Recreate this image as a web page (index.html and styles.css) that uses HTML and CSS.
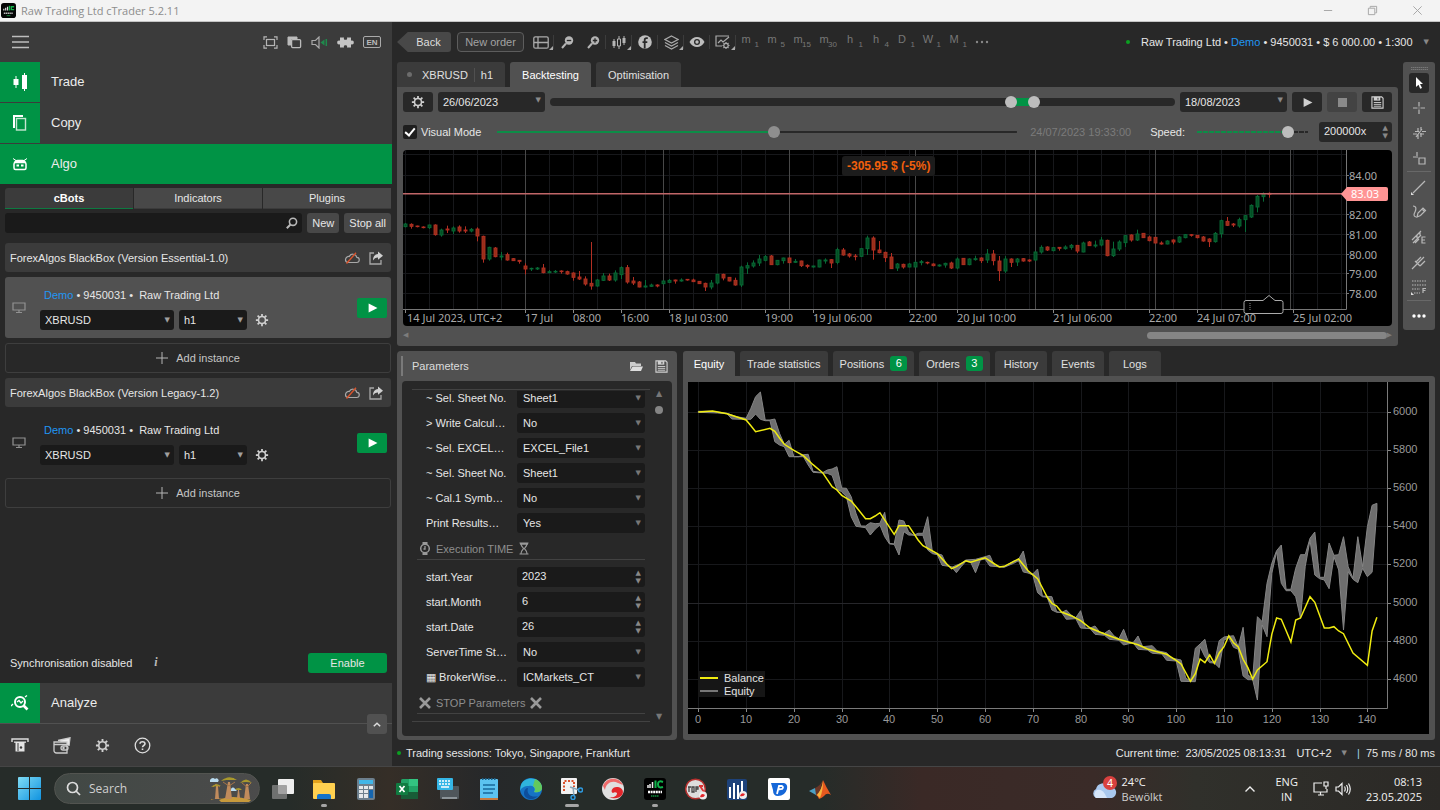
FILE: index.html
```html
<!DOCTYPE html>
<html lang="en">
<head>
<meta charset="utf-8">
<title>Raw Trading Ltd cTrader 5.2.11</title>
<link rel="stylesheet" href="styles.css">
</head>
<body>
<svg class="defs" aria-hidden="true">
  <symbol id="gear" viewBox="0 0 16 16"><circle cx="8" cy="8" r="4" fill="none" stroke="currentColor" stroke-width="1.8"/><path d="M8 1v2.6M8 12.4V15M1 8h2.6M12.4 8H15M3 3l2 2M11 11l2 2M3 13l2-2M11 5l2-2" stroke="currentColor" stroke-width="2" fill="none"/></symbol>
  <symbol id="save" viewBox="0 0 14 14"><path d="M1 1h10.500L13 2.500V13H1z" fill="none" stroke="currentColor" stroke-width="1.200"/><path d="M3 1h7v4H3z" fill="currentColor"/><path d="M7.500 2v2" stroke="#282828"/><path d="M3 7h8M3 9h8M3 11h8" stroke="currentColor"/></symbol>
  <symbol id="cloud" viewBox="0 0 16 12"><path d="M4 10.500h8.500a2.600 2.600 0 0 0 .3-5.200A4 4 0 0 0 5.300 4.500 3 3 0 0 0 4 10.500z" fill="none" stroke="#a8a8a8" stroke-width="1.200"/><path d="M2.500 11.500L12 .8" stroke="#d8532c" stroke-width="1.400"/></symbol>
  <symbol id="share" viewBox="0 0 14 14"><path d="M5 2H1v11h11V9" fill="none" stroke="#a8a8a8" stroke-width="1.300"/><path d="M9 .5l5 4.300-5 4V6.500C6.500 6.500 5.200 7.500 4 9.500 4 5.500 6 3.300 9 3z" fill="#d0d0d0"/></symbol>
  <symbol id="monitor" viewBox="0 0 14 12"><path d="M1 1h12v7H1zM4 10.500h6M7 8v2.500" fill="none" stroke="#929292" stroke-width="1.200"/></symbol>
  <symbol id="play" viewBox="0 0 10 10"><path d="M1.500 1l8 4-8 4z" fill="currentColor"/></symbol>
</svg>

<header class="titlebar">
  <svg class="app-logo" viewBox="0 0 16 16"><rect width="16" height="16" rx="3" fill="#050505"/><path d="M3 8V6M5 8V5M7 8V4" stroke="#ddd" stroke-width="1.300"/><path d="M9 3v5M14 4h-3v3h3" stroke="#13b34a" stroke-width="1.400" fill="none"/><path d="M3 11h10" stroke="#bbb" stroke-width="1.600" stroke-dasharray="1.500 .5"/><path d="M6 13.500h4" stroke="#138a3a"/></svg>
  <span>Raw Trading Ltd cTrader 5.2.11</span>
  <div class="win-controls">
    <button aria-label="Minimise"><svg viewBox="0 0 12 12"><path d="M1 6h9"/></svg></button>
    <button aria-label="Restore"><svg viewBox="0 0 12 12"><path d="M1.500 3.500h7v7h-7zM3.500 3V1.500h7v7H9"/></svg></button>
    <button aria-label="Close"><svg viewBox="0 0 12 12"><path d="M1.500 1.500l9 9M10.500 1.500l-9 9"/></svg></button>
  </div>
</header>

<div class="app">
  <aside class="sidebar">
    <div class="side-head">
      <button class="icon-btn" aria-label="Menu"><svg width="17" height="14" viewBox="0 0 17 14"><path d="M0 1.500h17M0 7h17M0 12.500h17" stroke="#bdbdbd" stroke-width="1.300"/></svg></button>
      <div class="side-tools">
        <button class="icon-btn" aria-label="Fullscreen"><svg width="15" height="13" viewBox="0 0 15 13" fill="none" stroke="#b5b5b5" stroke-width="1.200"><rect x="3.500" y="3.500" width="8" height="6"/><path d="M4 .8H1V4M11 .8h3V4M4 12.200H1V9M11 12.200h3V9"/></svg></button>
        <button class="icon-btn" aria-label="Windows"><svg width="15" height="13" viewBox="0 0 15 13"><path d="M1 1h9v2H4v6H1z" fill="#bbb" stroke="#bbb"/><rect x="4.600" y="3.600" width="9" height="8" rx="1" fill="#3b3b3b" stroke="#bbb" stroke-width="1.300"/></svg></button>
        <button class="icon-btn" aria-label="Sound"><svg width="17" height="13" viewBox="0 0 17 13" fill="none"><path d="M8 1v11L4.500 8.500H1v-4h3.500z" stroke="#aaa" stroke-width="1.200"/><path d="M9.500 6.500l4-3v6z" fill="#1f8a4c"/><path d="M15.300 3v7" stroke="#1f8a4c" stroke-width="1.500"/></svg></button>
        <button class="icon-btn" aria-label="Plugins"><svg width="17" height="13" viewBox="0 0 17 13"><path d="M3 1.500h4c-.6 2 .5 2.300 1.500 2.300S10.600 3.500 10 1.500h4v3.200c2-.6 2.800.5 2.800 1.800s-.8 2.400-2.800 1.800v3.200h-4c.6-2-.5-2.300-1.500-2.300S6.400 9.500 7 11.500H3V8.300C1 8.900.2 7.800.2 6.500S1 4.100 3 4.700z" fill="#c4c4c4"/></svg></button>
        <button class="lang">EN</button>
      </div>
    </div>
    <nav class="nav">
      <a href="#trade" class="nav-item"><span class="nav-ico"><svg width="16" height="18" viewBox="0 0 16 18" fill="#fff"><path d="M3.500 3h1v12h-1zM1.500 6h5v6h-5zM12 0h1v18h-1zM10 2h5v14h-5z"/></svg></span>Trade</a>
      <a href="#copy" class="nav-item"><span class="nav-ico"><svg width="16" height="18" viewBox="0 0 16 18" fill="none" stroke="#fff"><path d="M2 14V2h9" stroke-width="2"/><rect x="4.500" y="4.500" width="9" height="11.500" stroke-width="1.400" stroke="#c5e5d2"/></svg></span>Copy</a>
      <a href="#algo" class="nav-item active"><span class="nav-ico"><svg width="16" height="16" viewBox="0 0 16 16"><path d="M1 2.500l3 2M15 2.500l-3 2" stroke="#fff"/><path d="M2 7c0-2 1.500-3.200 3.500-3.200h5C12.500 3.800 14 5 14 7z" fill="#fff"/><rect x="2" y="6.500" width="12" height="7" rx="1.500" fill="none" stroke="#fff" stroke-width="1.500"/><path d="M4.500 9.500h2.500M9 9.500h2.500" stroke="#fff" stroke-width="1.800"/></svg></span>Algo</a>
    </nav>
    <div class="side-tabs" role="tablist">
      <button role="tab" class="on">cBots</button><button role="tab">Indicators</button><button role="tab">Plugins</button>
    </div>
    <div class="side-search">
      <label class="search-box"><input type="text" aria-label="Search cBots"><svg width="12" height="12" viewBox="0 0 12 12"><circle cx="7" cy="4.800" r="3.600" fill="none" stroke="#b8b8b8" stroke-width="1.600"/><path d="M4.500 7.500L.8 11.200" stroke="#b8b8b8" stroke-width="2"/></svg></label>
      <button>New</button><button>Stop all</button>
    </div>
    <div class="bots">
      <div class="bot-head"><span>ForexAlgos BlackBox (Version Essential-1.0)</span><svg width="16" height="12"><use href="#cloud"/></svg><svg width="14" height="14"><use href="#share"/></svg></div>
      <div class="bot selected">
        <svg width="14" height="12"><use href="#monitor"/></svg>
        <div class="bot-body">
          <p><a href="#acc">Demo</a> • 9450031 •&nbsp; Raw Trading Ltd</p>
          <div class="bot-ctl"><span class="sel sym"><select aria-label="Symbol"><option>XBRUSD</option></select></span><span class="sel per"><select aria-label="Period"><option>h1</option></select></span><button class="icon-btn" aria-label="Settings"><svg width="14" height="14"><use href="#gear"/></svg></button></div>
        </div>
        <button class="run" aria-label="Start"><svg width="11" height="12"><use href="#play"/></svg></button>
      </div>
      <button class="add"><svg width="12" height="12" viewBox="0 0 12 12"><path d="M6 0v12M0 6h12" stroke="#b5b5b5"/></svg>Add instance</button>
      <div class="bot-head"><span>ForexAlgos BlackBox (Version Legacy-1.2)</span><svg width="16" height="12"><use href="#cloud"/></svg><svg width="14" height="14"><use href="#share"/></svg></div>
      <div class="bot">
        <svg width="14" height="12"><use href="#monitor"/></svg>
        <div class="bot-body">
          <p><a href="#acc">Demo</a> • 9450031 •&nbsp; Raw Trading Ltd</p>
          <div class="bot-ctl"><span class="sel sym"><select aria-label="Symbol"><option>XBRUSD</option></select></span><span class="sel per"><select aria-label="Period"><option>h1</option></select></span><button class="icon-btn" aria-label="Settings"><svg width="14" height="14"><use href="#gear"/></svg></button></div>
        </div>
        <button class="run" aria-label="Start"><svg width="11" height="12"><use href="#play"/></svg></button>
      </div>
      <button class="add"><svg width="12" height="12" viewBox="0 0 12 12"><path d="M6 0v12M0 6h12" stroke="#b5b5b5"/></svg>Add instance</button>
    </div>
    <div class="sync"><span>Synchronisation disabled</span><i>i</i><button>Enable</button></div>
    <a href="#analyze" class="nav-item analyze"><span class="nav-ico"><svg width="18" height="18" viewBox="0 0 18 18" fill="none" stroke="#fff"><circle cx="9" cy="8" r="5" stroke-width="2"/><path d="M12.500 11.500l4 4" stroke-width="2.600"/><path d="M6 8l2-1.500L10 9l2-2M0 12l2-2M14 3l2-1.500" stroke-width="1.300"/></svg></span>Analyze</a>
    <div class="side-foot">
      <button class="icon-btn" aria-label="Deposit"><svg width="18" height="14" viewBox="0 0 18 14"><path d="M1 4V1h16v3" fill="none" stroke="#ddd" stroke-width="1.400"/><path d="M3 3.500h12v1.300H3zM4.500 4h9v9.500h-9z" fill="#e4e4e4"/><path d="M7 5v8" stroke="#3b3b3b"/><circle cx="10" cy="9.500" r="1.200" fill="#3b3b3b"/></svg></button>
      <button class="icon-btn" aria-label="Wallet"><svg width="18" height="17" viewBox="0 0 18 17" fill="none" stroke="#ccc" stroke-width="1.300"><path d="M5 3.500L17 .8l-1 8" fill="#eee"/><path d="M1 5h13v11H3.500C2 16 1 15 1 13.500zM1 7.500h13" fill="#3b3b3b"/><rect x="8" y="9" width="7" height="4" rx="2"/><circle cx="10.500" cy="11" r=".6"/></svg></button>
      <button class="icon-btn" aria-label="Settings"><svg width="15" height="15"><use href="#gear"/></svg></button>
      <button class="icon-btn" aria-label="Help"><svg width="17" height="17" viewBox="0 0 17 17" fill="none" stroke="#ddd"><circle cx="8.500" cy="8.500" r="7.300" stroke-width="1.300"/><path d="M6 6.800C6 4 11 4 11 6.800c0 1.700-2.500 1.700-2.500 3.400M8.500 11.500v1.500" stroke-width="1.600"/></svg></button>
      <button class="collapse" aria-label="Collapse"><svg width="8" height="5" viewBox="0 0 8 5"><path d="M.8 4.300L4 1.200l3.200 3.100" fill="none" stroke="#ddd" stroke-width="1.500"/></svg></button>
    </div>
  </aside>

  <main class="main">
    <div class="toolbar">
      <button class="back"><span>Back</span></button>
      <button class="new-order">New order</button>
      <div class="tools">
        <button class="icon-btn c s" aria-label="Layout"><svg width="16" height="13" viewBox="0 0 16 13" fill="none" stroke="#aaa" stroke-width="1.300"><rect x=".8" y=".8" width="14.400" height="11.400" rx="1.500"/><path d="M5 1v11M5 6.500h10M1 6.500h4"/></svg></button>
        <button class="icon-btn" aria-label="Zoom out"><svg width="13" height="13" viewBox="0 0 13 13"><circle cx="8" cy="4.500" r="4.200" fill="#b5b5b5"/><path d="M5 7.500L1 12" stroke="#b5b5b5" stroke-width="2"/><path d="M5.800 4.500h4.400" stroke="#282828" stroke-width="1.300"/></svg></button>
        <button class="icon-btn s" aria-label="Zoom in"><svg width="13" height="13" viewBox="0 0 13 13"><circle cx="8" cy="4.500" r="4.200" fill="#b5b5b5"/><path d="M5 7.500L1 12" stroke="#b5b5b5" stroke-width="2"/><path d="M5.800 4.500h4.400M8 2.300v4.400" stroke="#282828" stroke-width="1.300"/></svg></button>
        <button class="icon-btn c s" aria-label="Chart type"><svg width="14" height="15" viewBox="0 0 14 15"><path d="M2 4v9M7 1v13M12 1v9" stroke="#b5b5b5"/><path d="M.5 6h3v5h-3zM10.500 3h3v5h-3z" fill="#b5b5b5"/><path d="M5.500 4h3v7h-3z" fill="#282828" stroke="#b5b5b5"/></svg></button>
        <button class="icon-btn s" aria-label="Indicators"><svg width="14" height="14" viewBox="0 0 14 14"><circle cx="7" cy="7" r="6.800" fill="#bdbdbd"/><path d="M9.800 3.200H8.500C7.200 3.200 6.700 4 6.700 5v8.500M4.500 7.200h4.800" stroke="#282828" stroke-width="1.800" fill="none"/></svg></button>
        <button class="icon-btn c s" aria-label="Layers"><svg width="15" height="15" viewBox="0 0 15 15" fill="none" stroke="#aaa" stroke-width="1.200"><path d="M7.500 1L14 4.500 7.500 8 1 4.500zM1 7.500L7.500 11 14 7.500M1 10.500L7.500 14 14 10.500"/></svg></button>
        <button class="icon-btn s" aria-label="View"><svg width="16" height="12" viewBox="0 0 16 12"><path d="M.5 6C4-.6 12-.6 15.500 6 12 12.600 4 12.600.5 6z" fill="#bdbdbd"/><circle cx="8" cy="6" r="3" fill="#282828"/><circle cx="8" cy="6" r="1.700" fill="#bdbdbd"/></svg></button>
        <button class="icon-btn c s" aria-label="Chart settings"><svg width="16" height="15" viewBox="0 0 16 15" fill="none" stroke="#aaa" stroke-width="1.200"><path d="M14 1H1v10h6M3 8l3-3 2 2 6-5"/><circle cx="11" cy="10.500" r="2.200"/><path d="M11 7v1.200M11 12.800V14M7.500 10.500h1.200M13.300 10.500h1.200M8.500 8l.9.900M12.600 12.100l.9.900M8.500 13l.9-.9M12.600 8.900l.9-.9"/></svg></button>
      </div>
      <div class="frames"><button>m<sub>1</sub></button><button>m<sub>5</sub></button><button>m<sub>15</sub></button><button>m<sub>30</sub></button><button>h<sub>1</sub></button><button>h<sub>4</sub></button><button>D<sub>1</sub></button><button>W<sub>1</sub></button><button>M<sub>1</sub></button><button class="more" aria-label="More"><svg width="14" height="4" viewBox="0 0 14 4" fill="#888"><circle cx="2" cy="2" r="1.200"/><circle cx="7" cy="2" r="1.200"/><circle cx="12" cy="2" r="1.200"/></svg></button></div>
      <div class="account"><b class="dot"></b><span>Raw Trading Ltd • <a href="#acc">Demo</a> • 9450031 • $ 6 000.00 • 1:300</span><i class="tri">▼</i></div>
    </div>

    <div class="top">
      <section class="backtest">
        <div class="tabs" role="tablist">
          <button role="tab" class="symtab"><b></b><span>XBRUSD</span><span class="per-lbl">h1</span></button>
          <button role="tab" class="on">Backtesting</button>
          <button role="tab">Optimisation</button>
        </div>
        <div class="bt-panel">
          <div class="row">
            <button class="sq" aria-label="Settings"><svg width="14" height="14"><use href="#gear"/></svg></button>
            <span class="sel date"><select aria-label="From"><option>26/06/2023</option></select></span>
            <div class="dual">
              <div class="dual-fill" style="left:73.7%;width:3.7%"></div>
              <input type="range" aria-label="Range start" min="0" max="1000" value="742">
              <input type="range" aria-label="Range end" min="0" max="1000" value="779">
            </div>
            <span class="sel date"><select aria-label="To"><option>18/08/2023</option></select></span>
            <button class="sq" aria-label="Play"><svg width="11" height="11"><use href="#play"/></svg></button>
            <button class="sq dim" aria-label="Stop"><svg width="9" height="9"><rect width="9" height="9" fill="#8a8a8a"/></svg></button>
            <button class="sq" aria-label="Save"><svg width="13" height="13"><use href="#save"/></svg></button>
          </div>
          <div class="row">
            <label class="check"><input type="checkbox" checked>Visual Mode</label>
            <input class="line-range visual" type="range" aria-label="Progress" min="0" max="1000" value="532">
            <span class="stamp">24/07/2023 19:33:00</span>
            <label for="speed">Speed:</label>
            <input id="speed" class="line-range speed" type="range" min="0" max="1000" value="859">
            <span class="spin rate"><input type="text" aria-label="Speed value" value="200000x"><i>▲<br>▼</i></span>
          </div>
          <div class="price-chart">
            <svg id="price" viewBox="0 0 989 176" role="img" aria-label="XBRUSD h1 price chart"></svg>
            <output class="pl">-305.95 $ (-5%)</output>
          </div>
          <div class="hscroll"><i>◀</i><span><b></b></span><i>▶</i></div>
        </div>
      </section>
      <div class="drawbar">
        <svg class="grip" width="17" height="3" viewBox="0 0 17 3"><path d="M0 .5h17M0 2.500h17" stroke="#777" stroke-dasharray="1.500 .5"/></svg>
        <button class="cur" aria-label="Cursor"><svg width="9" height="12" viewBox="0 0 9 12"><path d="M1 0l7 7H5l2 4-1.800.8-1.700-4L1 10z" fill="#fff"/></svg></button>
        <button aria-label="Crosshair"><svg viewBox="0 0 14 14"><path d="M7 1v4.500M7 8.500V13M1 7h4.500M8.500 7H13M6.500 7h1"/></svg></button>
        <button aria-label="Sync crosshair"><svg viewBox="0 0 14 14"><path d="M6 2v4M6 8v5M1 8h4M8 8h4M9 1v4M9 7v4M3 5.500h4M10 5.500h4M4 11l6-8"/></svg></button>
        <button aria-label="Magnet"><svg viewBox="0 0 14 14"><path d="M5 1v4M1 6h5M7 7h6v6H7z"/></svg></button>
        <hr>
        <button aria-label="Line"><svg viewBox="0 0 14 14"><path d="M1 13L13 1"/><path d="M-1 12v3h3z" fill="#ddd" stroke="none"/></svg></button>
        <button aria-label="Pencil"><svg viewBox="0 0 14 14"><path d="M1 1c4 0 3 4 2 6s-2 4 1 5M5 12l1-4 5-5 2.500 2.500-5 5zM10 4l2.500 2.500"/></svg></button>
        <button aria-label="Fibonacci"><svg viewBox="0 0 14 14"><path d="M0 10l9-9M1 13l8-8M3 13l4-4M5 5v3M8 2v3M13.500 7H10v6h3.500M10 10h3"/></svg></button>
        <button aria-label="Pitchfork"><svg viewBox="0 0 14 14"><path d="M0 14l5-5M5 9l7-7M3 6l5 5M4 7l5-5M8 11l5-5"/></svg></button>
        <button aria-label="Patterns"><svg viewBox="0 0 14 14"><path d="M0 1h14M0 5h14M0 9h8M2 13h6" stroke-dasharray="1.500 1"/><path d="M11 13V8.500h3M11 10.500h2.500"/><path d="M-1 12v3h3z" fill="#ddd" stroke="none"/></svg></button>
        <hr>
        <button class="last" aria-label="More"><svg viewBox="0 0 14 14"><g fill="#fff" stroke="none"><circle cx="2" cy="7" r="1.700"/><circle cx="7" cy="7" r="1.700"/><circle cx="12" cy="7" r="1.700"/></g></svg></button>
      </div>
    </div>

    <div class="bottom">
      <section class="params">
        <header><b></b><h2>Parameters</h2><button class="icon-btn" aria-label="Open"><svg width="13" height="9" viewBox="0 0 13 9"><path d="M0 0h5l1 1.500h5V4H2L0 8z" fill="#ccc"/><path d="M2.500 4.500H13L11 9H0z" fill="#ddd"/></svg></button><button class="icon-btn" aria-label="Save"><svg width="13" height="13"><use href="#save"/></svg></button></header>
        <div class="param-box">
          <div class="param-list">
            <div class="param-scroll">
              <label class="param"><span>~ Sel. Sheet No.</span><span class="sel"><select><option>Sheet1</option></select></span></label>
              <label class="param"><span>&gt; Write Calcul…</span><span class="sel"><select><option>No</option></select></span></label>
              <label class="param"><span>~ Sel. EXCEL…</span><span class="sel"><select><option>EXCEL_File1</option></select></span></label>
              <label class="param"><span>~ Sel. Sheet No.</span><span class="sel"><select><option>Sheet1</option></select></span></label>
              <label class="param"><span>~ Cal.1 Symb…</span><span class="sel"><select><option>No</option></select></span></label>
              <label class="param"><span>Print Results…</span><span class="sel"><select><option>Yes</option></select></span></label>
              <h3><svg width="12" height="13" viewBox="0 0 12 13" fill="none" stroke="#999"><circle cx="6" cy="6.500" r="4.300" stroke-width="1.500"/><path d="M3.500 1h5M3.500 12h5" stroke-width="2"/><path d="M6 4v3H4.500" stroke-width="1.300"/></svg>Execution TIME<svg width="12" height="13" viewBox="0 0 12 13" fill="none" stroke="#999" stroke-width="1.200"><path d="M1.500 1h9M1.500 12h9M3 1.500c0 3 2.500 4 2.500 5S3 8.500 3 11.500M9 1.500c0 3-2.500 4-2.500 5S9 8.500 9 11.500M2 2.200h8"/></svg></h3>
              <label class="param"><span>start.Year</span><span class="spin"><input type="text" value="2023"><i>▲<br>▼</i></span></label>
              <label class="param"><span>start.Month</span><span class="spin"><input type="text" value="6"><i>▲<br>▼</i></span></label>
              <label class="param"><span>start.Date</span><span class="spin"><input type="text" value="26"><i>▲<br>▼</i></span></label>
              <label class="param"><span>ServerTime St…</span><span class="sel"><select><option>No</option></select></span></label>
              <label class="param"><span>▦ BrokerWise…</span><span class="sel"><select><option>ICMarkets_CT</option></select></span></label>
              <h3><svg width="12" height="12" viewBox="0 0 12 12"><path d="M1 1l10 10M11 1L1 11" stroke="#999" stroke-width="2.600"/></svg>STOP Parameters<svg width="12" height="12" viewBox="0 0 12 12"><path d="M1 1l10 10M11 1L1 11" stroke="#999" stroke-width="2.600"/></svg></h3>
            </div>
          </div>
          <div class="vscroll"><i>▲</i><b></b><i class="down">▼</i></div>
        </div>
      </section>

      <section class="results">
        <div class="tabs" role="tablist">
          <button role="tab" class="on">Equity</button><button role="tab">Trade statistics</button><button role="tab">Positions<b>6</b></button><button role="tab">Orders<b>3</b></button><button role="tab">History</button><button role="tab">Events</button><button role="tab">Logs</button>
        </div>
        <div class="eq-panel">
          <svg id="equity" viewBox="0 0 741 352" role="img" aria-label="Balance and equity chart"></svg>
        </div>
      </section>
    </div>

    <footer class="status"><b class="dot"></b><span>Trading sessions: Tokyo, Singapore, Frankfurt</span><span class="time">Current time:&nbsp; 23/05/2025 08:13:31</span><span class="utc">UTC+2</span><i class="tri">▼</i><span class="ping"><em>|</em>&nbsp; 75 ms / 80 ms</span></footer>
  </main>
</div>

<div class="taskbar">
  <button class="start" aria-label="Start"><svg width="23" height="23" viewBox="0 0 23 23"><defs><linearGradient id="w" x2="1" y2="1"><stop offset="0" stop-color="#7fdcf5"/><stop offset="1" stop-color="#1093e0"/></linearGradient></defs><path d="M0 1q0-1 1-1h10v11H0zM12 0h10q1 0 1 1v10H12zM0 12h11v11H1q-1 0-1-1zM12 12h11v10q0 1-1 1H12z" fill="url(#w)"/></svg></button>
  <label class="tb-search"><svg width="15" height="15" viewBox="0 0 15 15" fill="none" stroke="#ddd" stroke-width="1.700"><circle cx="6.500" cy="6.500" r="5"/><path d="M10 10l4 4"/></svg><input type="text" placeholder="Search" aria-label="Search"><svg width="44" height="26" viewBox="0 0 44 26"><path d="M10 24q12-6 32 0l-2 2H12z" fill="#c79a3c"/><path d="M2 24q6-3 14-1H2z" fill="#a57b33"/><path d="M7 10l-1 13h4L9 10M19 6l-3 17h7L21 6M29 14l-1 8h3l-1-8M37 8l-2 15h6L39 8" fill="#c08b5c"/><path d="M4 11l3-3 4 3M14 6l6 4 6-4M33 7l5 4 4-4" stroke="#a87548" fill="none"/><path d="M2 11q5-5 10-1-5 0-10 1zM12 5q8-7 16-1-8-1-16 1zM17 2h8v2h-8zM31 7q6-7 12 0-6-2-12 0zM25 14q5-4 8 0z" fill="#a8982c"/><path d="M1 6a3 3 0 0 1 5-3 2 2 0 0 1 3 3zM22 14a2 2 0 0 1 4-1l2 2h-6z" fill="#b9dcf0"/></svg></label>
  <div class="apps">
    <button aria-label="Task view"><svg viewBox="0 0 22 22"><rect x="6" y="1" width="16" height="15" rx="1" fill="#eee"/><rect x="0" y="7" width="15" height="14" rx="1" fill="#888" opacity=".75"/></svg></button>
    <button class="run1" aria-label="Explorer"><svg viewBox="0 0 22 22"><path d="M0 2h8l2 3h11v4H0z" fill="#e3a21b"/><rect y="5" width="22" height="16" rx="1" fill="#ffd04f"/><path d="M4 21v-3q0-2 2-2h10q2 0 2 2v3z" fill="#1673c9"/></svg></button>
    <button aria-label="Calculator"><svg viewBox="0 0 22 22"><rect x="2" width="18" height="22" rx="2" fill="#6d7f8d"/><rect x="4" y="2" width="14" height="4" fill="#41b6e8"/><path d="M4 8h4v3H4zM9 8h4v3H9zM14 8h4v3h-4zM4 12h4v3H4zM9 12h4v3H9zM4 16h4v4H4zM9 16h4v4H9z" fill="#e4e8eb"/><path d="M14 12h4v8h-4z" fill="#1566b0"/></svg></button>
    <button aria-label="Excel"><svg viewBox="0 0 22 22"><rect x="5" y="1" width="17" height="20" rx="1.500" fill="#21a366"/><path d="M5 8h8v7H5z" fill="#107c41"/><path d="M13 1h9v7h-9z" fill="#33c481"/><path d="M13 14h9v7h-9zM5 14h8v7H5z" fill="#185c37"/><rect y="5" width="12" height="12" rx="1" fill="#107c41"/><path d="M3.500 8l5 6M8.500 8l-5 6" stroke="#fff" stroke-width="1.700"/></svg></button>
    <button aria-label="Keyboard"><svg viewBox="0 0 22 22"><rect x="3" y="8" width="19" height="13" rx="1" fill="#4f565b"/><path d="M5 20h15" stroke="#8c9499" stroke-width="2"/><rect width="16" height="12" rx="1" fill="#35b6e6"/><path d="M2 3h12M2 6h12" stroke="#fff" stroke-width="1.500" stroke-dasharray="2 1"/><path d="M4 9h8" stroke="#fff" stroke-width="1.500"/></svg></button>
    <button aria-label="Notepad"><svg viewBox="0 0 22 22"><rect x="2" y="1" width="18" height="21" rx="1" fill="#5cc3f0"/><path d="M2 20h18v2H2z" fill="#c77b3f"/><path d="M4 1h14" stroke="#1c5f86" stroke-width="2" stroke-dasharray="1.500 1.500"/><path d="M5 7h12M5 11h12M5 15h10" stroke="#17699b" stroke-width="1.600"/></svg></button>
    <button aria-label="Edge"><svg viewBox="0 0 22 22"><circle cx="11" cy="11" r="11" fill="#1673c4"/><path d="M1 7C4-2 20-2 22 9c0 5-5 6-8 5 2-3 0-7-5-6C4 8 1 10 0 13z" fill="#2fb5dd"/><path d="M15 1c5 2 7 5 7 9 0 4-5 5-8 4 2-2 1-5-1-6z" fill="#63c95d"/><path d="M8 10c-2 7 4 10 10 8-4 5-14 4-14-3 0-3 2-5 4-5z" fill="#0d4e9b"/></svg></button>
    <button class="run2" aria-label="Snipping tool"><svg viewBox="0 0 22 22"><rect width="16" height="16" rx="1" fill="#f2f2f2"/><path d="M3 13V3h10v6" fill="none" stroke="#d9512c" stroke-width="2" stroke-dasharray="2 1.500"/><path d="M9 9l9 3M12 9l1 9" stroke="#8ba6b8" stroke-width="1.500"/><circle cx="19.500" cy="12" r="2" fill="none" stroke="#2e9ae0" stroke-width="1.500"/><circle cx="12" cy="19.500" r="2" fill="none" stroke="#2e9ae0" stroke-width="1.500"/></svg></button>
    <button aria-label="cTrader"><svg viewBox="0 0 22 22"><circle cx="11" cy="11" r="11" fill="#e0e0e0"/><path d="M1 8C4-1 17-2 21 7L16 5C10 2 4 5 3 12z" fill="#ee6a6a"/><path d="M11 15c-3-1-1-7 5-6 5 1 6 5 4 8-3 4-9 4-13 2 5 1 8-1 8-4-1-1-3-1-4 0z" fill="#e3262b"/></svg></button>
    <button class="run1" aria-label="IC Markets"><svg viewBox="0 0 22 22"><rect width="22" height="22" rx="3" fill="#000"/><path d="M4 10V7M6 10V6M8.500 10V4" stroke="#eee" stroke-width="1.500"/><path d="M11.500 2.500V10M19 4q-5-2-5 2.300T19 9" stroke="#10b34b" stroke-width="2" fill="none"/><path d="M4 14h14" stroke="#fff" stroke-width="2.500" stroke-dasharray="2 .6"/><path d="M7 18h8" stroke="#0e8c3c" stroke-width="1.500" stroke-dasharray="1.500 .5"/></svg></button>
    <button aria-label="TopFX"><svg viewBox="0 0 22 22"><circle cx="10.500" cy="11" r="9.800" fill="#ddd" stroke="#b5312f" stroke-width="1.500"/><path d="M4 9v5M3 9h3M7 9h2v5H7zM11 14V9h2v2h-2" stroke="#444" fill="none" stroke-width="1.300"/><path d="M14 8h4M15 8l4 6" stroke="#d33" stroke-width="1.800"/><circle cx="18" cy="17.500" r="4" fill="#eee"/><path d="M15 19q1-5 5-2-1 3-5 2z" fill="#e3262b"/></svg></button>
    <button aria-label="Broker"><svg viewBox="0 0 22 22"><rect x="1" y="1" width="20" height="21" rx="2" fill="#1d427a"/><path d="M4 20V9M8 21V5M12 21V7M16 15V3" stroke="#fff" stroke-width="2"/><circle cx="17" cy="17" r="4" fill="#eee"/><path d="M14 18q1-4 5-2-1 3-5 2z" fill="#e3262b"/></svg></button>
    <button aria-label="Pepperstone"><svg viewBox="0 0 22 22"><rect width="22" height="22" rx="2" fill="#fff"/><path d="M3 5h13q4 1 3 6-2 7-9 7-5 0-5-6z" fill="#1567d8"/><path d="M9 16l2-8h3q2 1 0 3l-4 .5" fill="none" stroke="#fff" stroke-width="1.800"/></svg></button>
    <button aria-label="MATLAB"><svg viewBox="0 0 22 22"><path d="M0 13l6-3 4 4-3 3z" fill="#4ca0c4"/><path d="M6 10q5-2 8-8l-4 14-3 1z" fill="#6a3626"/><path d="M14 2q3 7 8 15-4-3-7 1-2 2-5 3-1-3-3-4 5-2 7-15z" fill="#e6591f"/><path d="M14 3q-1 8-6 14l3 3q3-7 3-17z" fill="#f5b53d"/></svg></button>
  </div>
  <div class="weather"><svg width="26" height="26" viewBox="0 0 26 26"><path d="M4 22a5 5 0 0 1 0-9 7 7 0 0 1 13-2 5.500 5.500 0 0 1 3 11z" fill="#a9c8ee"/><path d="M4 22a5 5 0 0 1 1-8q6-2 10 8z" fill="#d6e6fa"/><circle cx="18" cy="7" r="7" fill="#d9413f"/><text x="18" y="11" class="badge-t">4</text></svg><p>24°C<br><span>Bewölkt</span></p></div>
  <div class="tray">
    <svg width="12" height="8" viewBox="0 0 12 8"><path d="M1.500 6.500L6 2l4.500 4.500" fill="none" stroke="#eee" stroke-width="1.400"/></svg>
    <p class="lang2">ENG<br>IN</p>
    <svg width="16" height="16" viewBox="0 0 16 16" fill="none" stroke="#eee" stroke-width="1.200"><path d="M9 2H1v9h13V8M5 14h6M7.500 11v3"/><path d="M11 1h4v4h-4zM13 5v3"/></svg>
    <svg width="16" height="14" viewBox="0 0 16 14" fill="none" stroke="#eee" stroke-width="1.200"><path d="M7 1.500v11L3.500 9H1V5h2.500zM9.500 4.500q1.500 2.500 0 5M11.500 3q2.500 4 0 8M13.500 1.500q3.500 5.500 0 11"/></svg>
    <p class="clock">08:13<br>23.05.2025</p>
  </div>
</div>
<script src="charts.js"></script>
</body>
</html>
```
FILE: styles.css
```css
* { box-sizing: border-box; }
body { margin: 0; height: 100vh; display: flex; flex-direction: column; background: #282828; color: #e6e6e6; font: 11px/14px "Liberation Sans", Arial, sans-serif; overflow: hidden; }
button, input, select { font: inherit; color: inherit; border: 0; background: none; margin: 0; padding: 0; }
button { cursor: pointer; }
p, h2, h3 { margin: 0; font: inherit; }
a { color: #2196f3; text-decoration: none; }
i, em { font-style: normal; }
svg { flex: none; display: block; }
.defs { position: absolute; width: 0; height: 0; }
.icon-btn { display: flex; align-items: center; justify-content: center; color: #d0d0d0; }

/* window title */
.titlebar { flex: none; height: 22px; display: flex; align-items: center; gap: 5px; padding-left: 1px; background: #f3f3f3; border-bottom: 1px solid #c4c4c4; color: #8d8d8d; font: 11px/16px "Open Sans", "Noto Sans", sans-serif; }
.app-logo { width: 15px; height: 15px; }
.win-controls { margin-left: auto; display: flex; }
.win-controls button { width: 44px; display: flex; justify-content: center; }
.win-controls button:last-child { width: 46px; }
.win-controls svg { width: 11px; height: 11px; fill: none; stroke: #a2a2a2; }

.app { flex: 1; min-height: 0; display: flex; gap: 5px; }

/* left sidebar */
.sidebar { flex: none; width: 392px; display: flex; flex-direction: column; }
.side-head { flex: none; height: 40px; display: flex; align-items: center; justify-content: space-between; padding: 0 11px 0 12px; background: #3b3b3b; }
.side-tools { display: flex; align-items: center; gap: 9px; }
.lang { width: 18px; height: 12px; border: 1px solid #aaa; border-radius: 2px; color: #bbb; font-size: 8px; line-height: 9px; font-weight: bold; }
.nav { background: #3b3b3b; display: flex; flex-direction: column; gap: 1px; }
.nav-item { display: flex; align-items: center; gap: 11px; height: 40px; color: #ececec; font-size: 13px; background: #3b3b3b; }
.nav-ico { width: 40px; height: 40px; display: flex; align-items: center; justify-content: center; background: #009345; }
.nav-item.active { background: #009345; }
.side-tabs { margin: 4px 1px 0 5px; display: flex; gap: 1px; }
.side-tabs button { flex: 1; height: 21px; background: #484848; border-bottom: 1px solid #3b3b3b; }
.side-tabs button.on { background: #3b3b3b; border-bottom: 1px solid #0d7a41; font-weight: bold; color: #fff; border-radius: 3px 0 0 0; }
.side-search { margin: 4px 1px 0 5px; display: flex; gap: 5px; height: 20px; }
.search-box { flex: 1; display: flex; align-items: center; padding-right: 4px; background: #1a1a1a; border-radius: 3px; }
.search-box input { flex: 1; min-width: 0; padding-left: 5px; outline: 0; }
.side-search button { padding: 0 5px; border-radius: 3px; background: #484848; }
.bots { flex: 1; margin: 10px 1px 0 5px; display: flex; flex-direction: column; gap: 5px; }
.bot-head { height: 29px; display: flex; align-items: center; gap: 9px; padding: 0 8px 0 5px; border-radius: 3px; background: #3b3b3b; }
.bot-head span { flex: 1; }
.bot { height: 61px; display: flex; align-items: center; gap: 15px; padding: 0 4px 0 7px; border-radius: 3px; }
.bot > svg { margin-right: -1px; }
.bot.selected { background: #515151; }
.bot-body { flex: 1; display: flex; flex-direction: column; gap: 8px; padding-top: 2px; }
.bot-body p { padding-left: 4px; }
.bot-ctl { display: flex; gap: 5px; }
.bot-ctl .icon-btn { margin-left: 3px; }
.run { width: 30px; height: 20px; display: flex; align-items: center; justify-content: center; border-radius: 2px; background: #009345; color: #fff; }
.add { height: 30px; display: flex; align-items: center; justify-content: center; gap: 8px; border: 1px solid #3e3e3e; border-radius: 3px; color: #c6c6c6; }
.sync { height: 41px; display: flex; align-items: center; padding: 0 5px 0 10px; }
.sync i { margin-left: 22px; font: italic bold 12px "Liberation Serif", serif; color: #bbb; }
.sync button { margin-left: auto; width: 79px; height: 20px; border-radius: 3px; background: #009345; }
.analyze { flex: none; }
.side-foot { position: relative; flex: none; height: 43px; display: flex; align-items: center; gap: 24px; padding-left: 11px; background: #3b3b3b; border-top: 1px solid #515151; }
.collapse { position: absolute; right: 5px; top: -10px; width: 20px; height: 20px; display: flex; align-items: center; justify-content: center; border-radius: 3px; background: #515151; }

/* drop-downs and number boxes */
.sel, .spin { position: relative; display: flex; height: 20px; border-radius: 3px; background: #1a1a1a; }
.sel select { flex: 1; min-width: 0; padding: 0 16px 0 5px; appearance: none; }
.sel::after { content: "▼"; position: absolute; right: 4px; top: 3px; color: #a0a0a0; font: 7px/14px "DejaVu Sans", sans-serif; pointer-events: none; }
.sym { width: 134px; }
.per { width: 68px; }
.date { width: 107px; background: #282828; }
.date::after { color: #8a8a8a; top: 1px; }
.spin input { flex: 1; min-width: 0; padding-left: 5px; padding-bottom: 2px; }
.spin i { position: absolute; right: 4px; top: 2px; color: #888; font: 7px/8px "DejaVu Sans", sans-serif; }
.tri { color: #888; font: 7px/14px "DejaVu Sans", sans-serif; }
.dot { width: 4px; height: 4px; border-radius: 50%; background: #0ba021; }

/* toolbar */
.main { flex: 1; min-width: 0; display: flex; flex-direction: column; }
.toolbar { flex: none; height: 40px; display: flex; align-items: center; }
.back { width: 54px; height: 20px; padding-left: 9px; background: #484848; border-radius: 0 3px 3px 0; clip-path: polygon(0 50%, 20% 0, 100% 0, 100% 100%, 20% 100%); color: #ddd; }
.new-order { width: 67px; height: 20px; margin-left: 6px; border: 1px solid #5d5d5d; border-radius: 4px; color: #a2a2a2; background: #323232; white-space: nowrap; }
.tools { display: flex; margin-left: 4px; }
.tools button { position: relative; width: 26px; height: 20px; }
.tools .c::before { content: ""; position: absolute; right: 1px; bottom: 2px; border: 2px solid transparent; border-right-color: #aaa; border-bottom-color: #aaa; }
.tools .s::after { content: ""; position: absolute; right: 0; top: 3px; width: 1px; height: 14px; background: #3c3c3c; }
.frames { display: flex; margin-left: 1px; color: #777; }
.frames button { position: relative; width: 26px; height: 20px; padding: 0 10px 6px 2px; }
.frames sub { position: absolute; right: 4px; bottom: 3px; font-size: 8px; line-height: 8px; }
.frames button.more { padding: 0 0 0 4px; }
.account { margin-left: auto; display: flex; align-items: center; gap: 11px; padding-right: 11px; }

.top { display: flex; gap: 5px; padding-right: 5px; }
.backtest, .results { flex: 1; min-width: 0; display: flex; flex-direction: column; }
.tabs { display: flex; gap: 5px; flex: none; }
.tabs button { min-width: 52px; height: 25px; padding: 0 7px; display: flex; align-items: center; justify-content: center; border-radius: 3px 3px 0 0; background: #3b3b3b; color: #e0e0e0; white-space: nowrap; }
.tabs button.on { background: #515151; color: #fff; }
.backtest .tabs button { padding: 0 12px; }
.backtest .symtab b { width: 5px; height: 5px; margin: 0 10px 0 -2px; border-radius: 50%; background: #6c6c6c; }
.per-lbl { margin-left: 6px; padding-left: 6px; border-left: 1px solid #505050; }
.bt-panel { padding: 5px 6px 0; border-radius: 0 3px 3px 3px; background: #515151; }
.row { display: flex; align-items: center; gap: 5px; height: 20px; margin-bottom: 10px; }
.row + .row { margin-bottom: 8px; }
.sq { flex: none; width: 30px; height: 20px; display: flex; align-items: center; justify-content: center; border-radius: 3px; background: #282828; color: #cfcfcf; }
.sq.dim { background: #434343; }
.dual { position: relative; flex: 1; height: 8px; border-radius: 4px; background: #282828; }
.dual-fill { position: absolute; top: 0; height: 8px; background: #009345; }
.dual input { position: absolute; left: 0; top: -2px; width: 100%; height: 12px; appearance: none; pointer-events: none; }
.row input[type=range]::-webkit-slider-thumb { appearance: none; width: 12px; height: 12px; border-radius: 50%; background: #bdbdbd; pointer-events: auto; }
.check { display: flex; align-items: center; gap: 4px; }
.check input { appearance: none; width: 14px; height: 14px; border-radius: 2px; background: #1e1e1e; display: grid; place-items: center; }
.check input:checked::before { content: ""; width: 4px; height: 8px; margin-bottom: 2px; border: solid #fff; border-width: 0 2px 2px 0; transform: rotate(40deg); }
.line-range { appearance: none; height: 12px; }
.line-range.visual { flex: 1; margin-left: 11px; background: linear-gradient(90deg, #0c8d47 53%, #282828 53%) center / 100% 2px no-repeat; }
.row input.visual::-webkit-slider-thumb { background: #8f8f8f; }
.line-range.speed { width: 111px; margin-left: 7px; background: repeating-linear-gradient(90deg, transparent 0 5px, #515151 5px 6px) center / 100% 2px no-repeat, linear-gradient(90deg, #0c8d47 82%, #282828 82%) center / 100% 2px no-repeat; }
.stamp { margin: 0 14px 0 8px; color: #7b7b7b; }
.rate { width: 73px; margin-left: 6px; background: #282828; }
.price-chart { position: relative; border-radius: 4px; background: #000; overflow: hidden; }
.price-chart svg, .eq-panel svg { width: 100%; height: auto; }
.price-chart text { font: 11px "Noto Sans", sans-serif; fill: #a9a9a9; }
.price-chart .tag { fill: #fff; }
.pl { position: absolute; left: 439px; top: 6px; padding: 3px 5px; border-radius: 3px; background: #1c1c1c; color: #f2600c; font-weight: bold; font-size: 12px; white-space: nowrap; }
.hscroll { display: flex; align-items: center; height: 20px; padding-bottom: 2px; color: #7c7c7c; font: 7px/10px "DejaVu Sans", sans-serif; }
.hscroll span { flex: 1; display: flex; justify-content: flex-end; }
.hscroll b { width: 24.500%; height: 7px; border-radius: 4px; background: #858585; }

.drawbar { flex: none; align-self: flex-start; width: 32px; display: flex; flex-direction: column; align-items: center; padding: 5px 0 4px; border-radius: 3px; background: #515151; }
.drawbar button { width: 20px; height: 20px; margin-top: 5px; display: flex; align-items: center; justify-content: center; border-radius: 3px; }
.drawbar button.cur { margin-top: 3px; background: #282828; }
.drawbar button svg:not([width]) { width: 14px; height: 14px; fill: none; stroke: #b8b8b8; stroke-width: 1.200; overflow: visible; }
.drawbar hr { width: 24px; margin: 3px 0 0; border: 0; border-top: 1px solid #686868; }

/* lower half */
.bottom { flex: 1; min-height: 0; display: flex; gap: 6px; padding: 5px 5px 0 0; }
.params { flex: none; width: 280px; display: flex; flex-direction: column; padding: 0 5px 4px; border-radius: 4px; background: #515151; }
.params header { flex: none; height: 30px; display: flex; align-items: center; }
.params header b { width: 2px; height: 20px; margin-left: -1px; background: #7a7a7a; }
.params h2 { flex: 1; margin-left: 9px; color: #dcdcdc; }
.params header .icon-btn { margin-right: 12px; }
.params header .icon-btn:last-child { margin-right: 4px; }
.param-box { flex: 1; min-height: 0; display: flex; gap: 5px; padding: 8px 9px 14px 10px; border-radius: 4px; background: #282828; }
.param-list { flex: 1; overflow: hidden; display: flex; border: solid #424242; border-width: 1px 0; padding: 1px 5px 7px 5px; }
.param-scroll { flex: 1; overflow: hidden; display: flex; flex-direction: column; justify-content: flex-end; gap: 5px; }
.param { flex: none; display: flex; align-items: center; height: 20px; padding-left: 9px; }
.param > span:first-child { flex: none; width: 91px; white-space: nowrap; }
.param .sel, .param .spin { flex: 1; min-width: 0; }
.param .sel::after { color: #777; }
.param .sel select { padding-left: 6px; }
.param-scroll h3 { flex: none; height: 22px; display: flex; align-items: center; gap: 5px; padding-left: 2px; border-bottom: 1px solid #424242; color: #8e8e8e; }
.param-scroll h3:not(:last-child) { margin-bottom: 2px; }
.vscroll { display: flex; flex-direction: column; align-items: center; color: #777; font: 8px/10px "DejaVu Sans", sans-serif; }
.vscroll b { width: 8px; height: 8px; margin-top: 7px; border-radius: 50%; background: #858585; }
.vscroll .down { margin-top: auto; }
.results .tabs button b { min-width: 17px; height: 15px; margin: 0 0 0 6px; border-radius: 3px; background: #009345; color: #fff; font-weight: normal; line-height: 15px; }
.eq-panel { flex: 1; padding: 6px 6px 6px 5px; border-radius: 0 3px 3px 3px; background: #515151; }
.eq-panel svg { background: #000; }
.eq-panel text { font: 11px "Liberation Sans", Arial, sans-serif; fill: #9a9a9a; }
.eq-panel .mid { text-anchor: middle; }
.eq-panel .leg { fill: #e2e2e2; }

.status { flex: none; height: 26px; display: flex; align-items: center; gap: 5px; padding-right: 5px; }
.status .time { margin-left: auto; }
.status .utc { margin: 0 5px; }
.status .ping { margin-left: 5px; }
.status em { color: #9fd0e8; }

/* taskbar */
.taskbar { flex: none; height: 44px; display: flex; align-items: center; border-top: 1px solid #454545; background: linear-gradient(90deg, #262c29 0%, #262c29 20%, #352e27 27%, #26282a 34%, #262c29 40%, #262c29 57%, #3a2926 64%, #3a2b28 76%, #30302b 83%, #2b2926 100%); font: 11px/15px "Open Sans", "Noto Sans", sans-serif; color: #f2f2f2; }
.start { margin-left: 18px; width: 23px; height: 23px; }
.tb-search { width: 206px; height: 31px; margin-left: 13px; display: flex; align-items: center; gap: 8px; padding: 0 6px 0 11px; border: 1px solid #525450; border-radius: 16px; background: linear-gradient(90deg, #414844, #4b4b4b); font-size: 12px; }
.tb-search input { flex: 1; min-width: 0; }
.tb-search input::placeholder { color: #d0d0d0; opacity: 1; }
.apps { width: 559px; margin-left: 12px; display: flex; justify-content: space-between; }
.apps button { position: relative; width: 22px; height: 22px; }
.apps svg { width: 22px; height: 22px; }
.run1::after, .run2::after { content: ""; position: absolute; left: 8px; bottom: -7px; width: 6px; height: 3px; border-radius: 2px; background: #a5a5a5; }
.run2::after { left: 4px; width: 14px; }
.weather { margin-left: auto; display: flex; align-items: center; gap: 4px; }
.weather span { color: #cfcfcf; }
.badge-t { font: 11px "Liberation Sans", sans-serif; fill: #fff; text-anchor: middle; }
.tray { display: flex; align-items: center; margin-left: 82px; padding-right: 18px; }
.lang2 { margin: 0 15px 0 19px; text-align: center; }
.tray svg + svg { margin-left: 6px; }
.clock { margin-left: 15px; text-align: right; }
```
FILE: charts.js
```js
const NS = "http://www.w3.org/2000/svg";
function add(svg, tag, attrs, text) {
  const el = document.createElementNS(NS, tag);
  for (const k in attrs) el.setAttribute(k, attrs[k]);
  if (text !== undefined) el.textContent = text;
  svg.appendChild(el);
  return el;
}
const line = (svg, x1, y1, x2, y2, stroke) => add(svg, "line", { x1, y1, x2, y2, stroke, "stroke-width": 1 });

/* price chart: direction, body top, body bottom, wick top, wick bottom (thirds of a pixel) */
const bars = `g 237 245 234 247;r 238 244 235 251;r 243 245 242 247;r 246 248 244 250;g 240 248 239 252;r 240 269 238 272;g 255 270 251 275;r 252 255 242 264;g 249 258 244 267;r 246 258 241 263;r 255 258 244 264;g 253 258 249 262;r 252 273 247 289;r 274 342 272 353;g 307 342 305 347;r 309 335 306 337;g 333 336 321 346;r 329 345 323 347;r 341 347 339 348;r 346 349 346 356;r 363 372 355 388;g 370 372 368 378;g 369 372 366 375;r 369 383 357 385;g 380 383 375 385;g 379 381 375 384;r 378 380 376 386;r 380 387 377 389;r 384 397 382 407;r 396 402 378 405;r 402 417 394 422;r 415 423 291 434;g 405 423 402 425;g 393 406 384 408;r 393 405 386 408;g 384 405 376 410;g 368 389 364 402;r 368 411 360 416;r 408 414 396 420;r 411 426 408 427;g 423 426 405 428;g 420 424 416 426;r 420 423 418 427;g 408 416 407 419;g 406 412 402 414;r 405 408 404 416;g 405 408 400 410;r 403 405 402 407;r 405 410 401 411;r 409 416 408 417;r 415 426 413 438;g 414 426 405 433;g 388 414 386 418;r 388 399 386 406;r 397 408 396 409;r 406 420 398 422;g 366 420 362 426;g 362 369 352 387;g 354 363 346 368;g 342 354 330 363;g 335 346 330 349;r 333 359 330 360;g 346 359 345 361;g 339 347 338 356;r 339 353 338 354;g 349 352 342 354;r 348 362 347 366;r 361 364 358 370;g 363 366 362 368;g 345 366 344 367;g 345 348 340 356;r 344 354 342 369;g 314 352 308 358;r 315 330 309 332;r 327 333 324 338;r 333 335 327 346;g 311 334 309 336;g 279 311 272 330;r 279 315 274 344;r 315 323 288 325;r 322 338 320 351;r 336 371 324 372;g 357 369 354 378;r 358 366 356 371;g 357 366 354 367;g 352 366 349 367;g 350 353 345 361;r 352 354 350 358;r 357 362 355 364;g 360 363 358 365;g 355 360 353 368;r 354 369 350 372;g 342 369 337 373;r 340 359 339 360;g 342 359 340 361;g 341 344 332 347;r 339 347 337 354;g 327 345 312 354;r 327 347 315 361;r 348 377 333 408;g 342 378 333 384;r 342 352 340 366;g 342 351 339 363;r 341 348 339 350;r 345 348 343 351;g 321 345 319 348;g 307 321 301 326;r 306 315 304 318;g 308 317 306 319;r 307 310 307 317;g 306 311 301 314;g 301 307 297 314;r 301 318 301 324;g 294 321 290 322;r 291 302 288 303;g 300 303 287 308;g 285 300 276 304;r 286 332 284 334;g 312 332 290 336;g 291 312 286 318;g 272 293 270 306;r 270 285 268 290;g 267 285 254 288;r 265 278 264 279;r 276 287 272 289;r 277 294 276 295;r 294 297 289 299;g 288 297 286 298;r 285 291 283 298;g 276 291 273 294;g 269 278 267 280;r 269 271 267 275;r 271 278 270 280;r 276 288 273 290;r 282 290 280 306;g 265 290 261 293;g 227 266 224 278;r 229 241 216 243;r 237 240 234 246;g 224 243 218 248;g 212 224 210 261;g 181 216 178 219;g 154 186 150 202;g 146 155 142 170;r 145 148 142 158`.split(";");
const price = document.getElementById("price");
for (let x = 2.5; x < 943; x += 24) line(price, x, 0, x, 159, "#17181b");
for (const y of [4.5, 25.5, 64.5, 84.5, 104.5, 123.5, 143.5]) line(price, 0, y, 943, y, "#17181b");
for (const x of [122.5, 260.5, 386.5, 512.5, 632.5, 752.5, 887.5]) line(price, x, 0, x, 159, "#484848");
const y3 = v => v / 3 - 5;
bars.forEach((b, i) => {
  const [d, t, bt, wt, wb] = b.split(" ");
  const x = 2.5 + i * 6, up = d === "g", c = up ? "#086a36" : "#b32f23";
  line(price, x, y3(+wt), x, y3(+wb), c);
  add(price, "rect", { x: x - 1.5, y: y3(+t), width: 3, height: Math.max(.5, y3(+bt) - y3(+t)), fill: up ? "#044d24" : "#94301a", stroke: c, "stroke-width": .9 });
});
add(price, "path", { d: "M0 43.800H943", stroke: "#c06668", "stroke-width": 1.6 });
add(price, "path", { d: "M0 159.500H943.500V0", fill: "none", stroke: "#777" });
for (const [x, t] of [[2, "14 Jul 2023, UTC+2"], [122, "17 Jul"], [170, "08:00"], [218, "16:00"], [266, "18 Jul 03:00"], [362, "19:00"], [410, "19 Jul 06:00"], [506, "22:00"], [554, "20 Jul 10:00"], [650, "21 Jul 06:00"], [746, "22:00"], [794, "24 Jul 07:00"], [890, "25 Jul 02:00"]]) {
  line(price, x + .5, 160, x + .5, 163, "#888");
  add(price, "text", { x: t.includes("UTC") ? 4 : x, y: 172 }, t);
}
for (const [y, t] of [[25, "84.00"], [64, "82.00"], [84, "81.00"], [104, "80.00"], [123, "79.00"], [143, "78.00"]]) {
  line(price, 944, y + .5, 946, y + .5, "#777");
  add(price, "text", { x: 946, y: y + 5 }, t);
}
add(price, "path", { d: "M938 44l6-7h39q2 0 2 2v10q0 2-2 2h-39z", fill: "#ff9494" });
add(price, "text", { x: 948, y: 48, class: "tag" }, "83.03");
add(price, "path", { d: "M843 150.500h17l6-5 6 5h6q2 0 2 2v9q0 2-2 2h-35q-2 0-2-2v-9q0-2 2-2z", fill: "#000", stroke: "#aaa" });
add(price, "path", { d: "M847 153v8", stroke: "#888", "stroke-dasharray": "1 1" });

/* balance and equity */
const parse = s => s.trim().split(/[; ]+/).map(p => p.split(",").map(Number));
const px = n => 10.3 + n * 4.779;
const join = (a, b) => parse(a).concat(parse(b).map(([n, y]) => [n, y + 60]));
const pts = l => l.map(([n, y]) => px(n).toFixed(1) + "," + (y / 3 - 32).toFixed(1));
const balance = join(
  "0,186 3,183 6,191 10,210 11,227 12,245 15,235 16,244 17,264 18,283 20,301 22,317 24,344 26,368 28,410 29,420 30,436 32,453 33,470 35,506 36,506 37,498 38,488 41,553 42,527 44,527 46,570 47,587 50,611 52,642 53,656 54,650 56,632 57,637 60,623 62,642 63,651 64,649 67,627 69,662 71,686 73,741 74,760 75,768 76,786 78,797",
  "80,752 82,774 84,786 86,797 88,808 90,816 92,824 94,837 96,845 98,853 100,871 101,882 103,934 104,911 105,867 106,878 107,855 108,880 109,849 110,830 111,797 112,818 113,831 114,868 115,893 116,927 117,900 119,875 120,793 121,744 122,748 124,816 125,750 126,744 128,680 129,697 131,774 132,774 133,770 134,783 135,791 137,849 140,886 141,783 142,742");
const upper = join(
  "0,184 3,184 6,190 8,200 10,205 11,175 12,140 13,126 14,210 15,210 16,207 17,250 18,283 19,271 20,320 21,320 22,314 23,313 24,364 26,368 27,360 28,357 29,350 30,414 31,415 32,440 33,490 34,528 35,528 36,518 37,521 38,520 39,487 40,580 41,582 42,510 43,513 44,545 45,556 46,550 47,550 48,500 49,608 50,611 51,615 52,645 53,652 55,640 56,630 58,628 60,620 61,616 62,648 64,650 66,633 67,628 68,603 69,668 70,672 71,657 72,738 74,740 75,785 76,788 77,780 78,795 79,803",
  "80,722 81,774 82,774 83,768 84,786 85,790 86,780 87,798 88,806 89,778 90,816 91,818 92,798 93,830 95,827 96,842 98,848 99,864 101,870 102,925 103,932 104,835 105,822 106,808 107,872 108,878 109,812 110,801 112,797 113,830 114,772 115,915 116,925 117,740 118,755 119,640 120,580 121,542 122,525 123,658 124,658 125,595 126,554 127,554 128,505 129,486 130,622 131,622 132,519 133,556 134,554 135,500 136,590 137,625 138,500 139,590 140,470 141,406 142,400");
const lower = join(
  "0,187 4,189 6,191 7,207 9,208 11,208 12,192 13,208 14,212 15,212 16,275 17,285 18,290 19,320 22,320 23,345 24,367 26,369 27,370 28,376 29,418 30,425 31,440 32,500 33,529 35,533 36,555 37,538 38,525 39,560 40,582 41,583 42,615 43,545 44,555 47,556 48,600 49,611 50,614 51,646 53,650 54,668 55,650 56,634 57,637 58,668 59,630 60,627 61,648 64,652 66,640 67,632 68,666 69,669 70,675 71,728 72,740 73,742 74,780 75,787 76,787 77,808 79,806",
  "80,774 82,776 83,793 85,796 86,808 88,811 89,825 91,818 92,838 94,840 95,850 97,852 98,871 100,873 101,934 104,935 105,830 106,860 107,878 108,879 109,893 110,810 111,803 112,832 113,838 114,918 115,929 116,929 117,990 118,765 119,800 120,610 121,545 122,640 123,662 124,662 125,680 126,745 127,590 128,510 129,615 130,626 131,630 132,656 133,560 134,600 135,780 136,605 137,628 138,638 139,595 140,620 141,607 142,420");
const eq = document.getElementById("equity");
for (let n = 0; n <= 140; n += 10) {
  const x = Math.round(px(n)) + .5;
  line(eq, x, 0, x, 326, "#17181b");
  line(eq, x, 327, x, 330, "#888");
  add(eq, "text", { x: x - .5, y: 341, class: "mid" }, n);
}
for (let v = 6000, i = 0; v >= 4600; v -= 200, i++) {
  const y = Math.round(29.5 + i * 38.2) + .5;
  line(eq, 0, y, 699, y, v === 5000 ? "#26262a" : "#17181b");
  line(eq, 700, y, 703, y, "#888");
  add(eq, "text", { x: 705, y: y + 2.5 }, v);
}
add(eq, "path", { d: "M0 326.500H699.500V0", fill: "none", stroke: "#7a7a7a" });
add(eq, "polygon", { points: pts(upper).concat(pts(lower).reverse()).join(" "), fill: "#6e6e6e", stroke: "#858585", "stroke-width": 1 });
add(eq, "polyline", { points: pts(balance).join(" "), fill: "none", stroke: "#f0ec10", "stroke-width": 1.5 });
add(eq, "rect", { x: 10, y: 289, width: 67, height: 26, fill: "#161616" });
add(eq, "path", { d: "M12 296h18", stroke: "#f0ec10", "stroke-width": 2 });
add(eq, "path", { d: "M12 309h18", stroke: "#777", "stroke-width": 2 });
add(eq, "text", { x: 36, y: 300, class: "leg" }, "Balance");
add(eq, "text", { x: 36, y: 313, class: "leg" }, "Equity");
```
